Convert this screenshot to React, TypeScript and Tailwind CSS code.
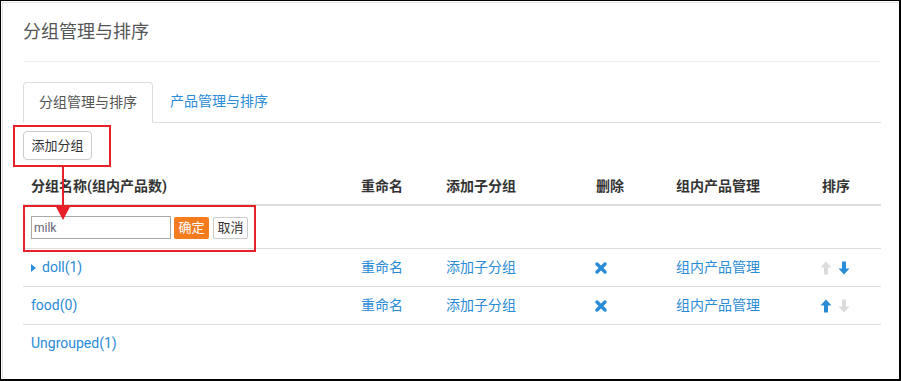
import React from 'react'

const blue = 'text-[#2a8bd6]'

function CloseIcon() {
  return (
    <svg width="12" height="12" viewBox="0 0 12 12" className="inline-block">
      <path d="M2 2 L10 10 M10 2 L2 10" stroke="#2a8bd6" strokeWidth="3.4" strokeLinecap="round" />
    </svg>
  )
}

function ArrowIcon({ dir, active }: { dir: 'up' | 'down'; active: boolean }) {
  const color = active ? '#2a8bd6' : '#dcdcdc'
  return (
    <svg
      width="12"
      height="14"
      viewBox="0 0 12 14"
      className="inline-block"
      style={{ transform: dir === 'down' ? 'rotate(180deg)' : undefined }}
    >
      <path d="M6 0.5 L11.5 6.5 L8 6.5 L8 13.5 L4 13.5 L4 6.5 L0.5 6.5 Z" fill={color} />
    </svg>
  )
}

const cols = 'grid grid-cols-[330px_85px_150px_80px_146px_67px]'

interface Row {
  name: string
  caret?: boolean
  up: boolean
  down: boolean
}

const rows: Row[] = [
  { name: 'doll(1)', caret: true, up: false, down: true },
  { name: 'food(0)', up: true, down: false },
]

export default function App() {
  return (
    <div className="w-[901px] h-[381px] bg-white border-l border-t border-r-2 border-b-2 border-black p-px font-['Roboto','Noto_Sans_CJK_SC',sans-serif]">
      <div className="relative h-full border-l border-t border-[#e3e3e3] pl-[20px] pt-[16px]">
        <h1 className="text-[18px] leading-[26px] text-[#555]">分组管理与排序</h1>
        <div className="mt-[16px] w-[858px] border-t border-[#eee]" />

        <div className="mt-[20px] w-[858px] flex border-b border-[#ddd] text-[14px]">
          <div className="-mb-px border border-[#ddd] border-b-white rounded-t-[4px] bg-white px-[15px] py-[10px] leading-[19px] text-[#555]">
            分组管理与排序
          </div>
          <div className={`ml-[2px] px-[15px] py-[10px] leading-[19px] ${blue}`}>产品管理与排序</div>
        </div>

        <button className="mt-[8px] h-[29px] w-[69px] rounded-[4px] border border-[#ccc] bg-white text-[13px] text-[#333]">
          添加分组
        </button>

        <div className="mt-[8px] w-[858px] text-[14px]">
          <div className={`${cols} border-b-2 border-[#ddd] font-bold text-[#333] leading-[20px]`}>
            <div className="p-[8px]">分组名称(组内产品数)</div>
            <div className="p-[8px]">重命名</div>
            <div className="p-[8px]">添加子分组</div>
            <div className="p-[8px]">删除</div>
            <div className="p-[8px]">组内产品管理</div>
            <div className="p-[8px]">排序</div>
          </div>

          <div className={`${cols} pt-[10px] pb-[9px]`}>
            <div className="flex items-center px-[8px]">
              <input
                defaultValue="milk"
                className="h-[23px] w-[140px] border border-[#aaa] px-[2px] text-[12px] text-[#667] outline-none"
              />
              <button className="ml-[3px] h-[22px] w-[35px] rounded-[2px] bg-[#f57b1f] text-[13px] text-white">确定</button>
              <button className="ml-[4px] h-[22px] w-[35px] rounded-[2px] border border-[#ccc] bg-white text-[13px] text-[#333]">取消</button>
            </div>
          </div>

          {rows.map((r) => (
            <div key={r.name} className={`${cols} border-t border-[#ddd] leading-[21px] ${blue}`}>
              <div className="flex items-center p-[8px]">
                {r.caret && (
                  <svg width="5" height="8" viewBox="0 0 5 8" className="mr-[6px]">
                    <path d="M0 0 L5 4 L0 8 Z" fill="#2a8bd6" />
                  </svg>
                )}
                {r.name}
              </div>
              <div className="p-[8px]">重命名</div>
              <div className="p-[8px]">添加子分组</div>
              <div className="flex items-center p-[8px] pl-[7px]">
                <CloseIcon />
              </div>
              <div className="p-[8px]">组内产品管理</div>
              <div className="flex items-center gap-[6px] p-[8px] pl-[6px]">
                <ArrowIcon dir="up" active={r.up} />
                <ArrowIcon dir="down" active={r.down} />
              </div>
            </div>
          ))}

          <div className={`border-t border-[#ddd] p-[8px] leading-[21px] ${blue}`}>Ungrouped(1)</div>
        </div>

        {/* annotation boxes */}
        <div className="absolute left-[10px] top-[122px] h-[42px] w-[98px] border-2 border-[#e8202a]" />
        <div className="absolute left-[20px] top-[202px] h-[47px] w-[233px] border-2 border-[#e8202a]" />
        <svg className="absolute left-[50px] top-[164px]" width="20" height="53" viewBox="0 0 20 53">
          <line x1="10" y1="0" x2="10" y2="40" stroke="#e8202a" strokeWidth="2" />
          <path d="M2 38 L18 38 L10 53 Z" fill="#e8202a" />
        </svg>
      </div>
    </div>
  )
}
